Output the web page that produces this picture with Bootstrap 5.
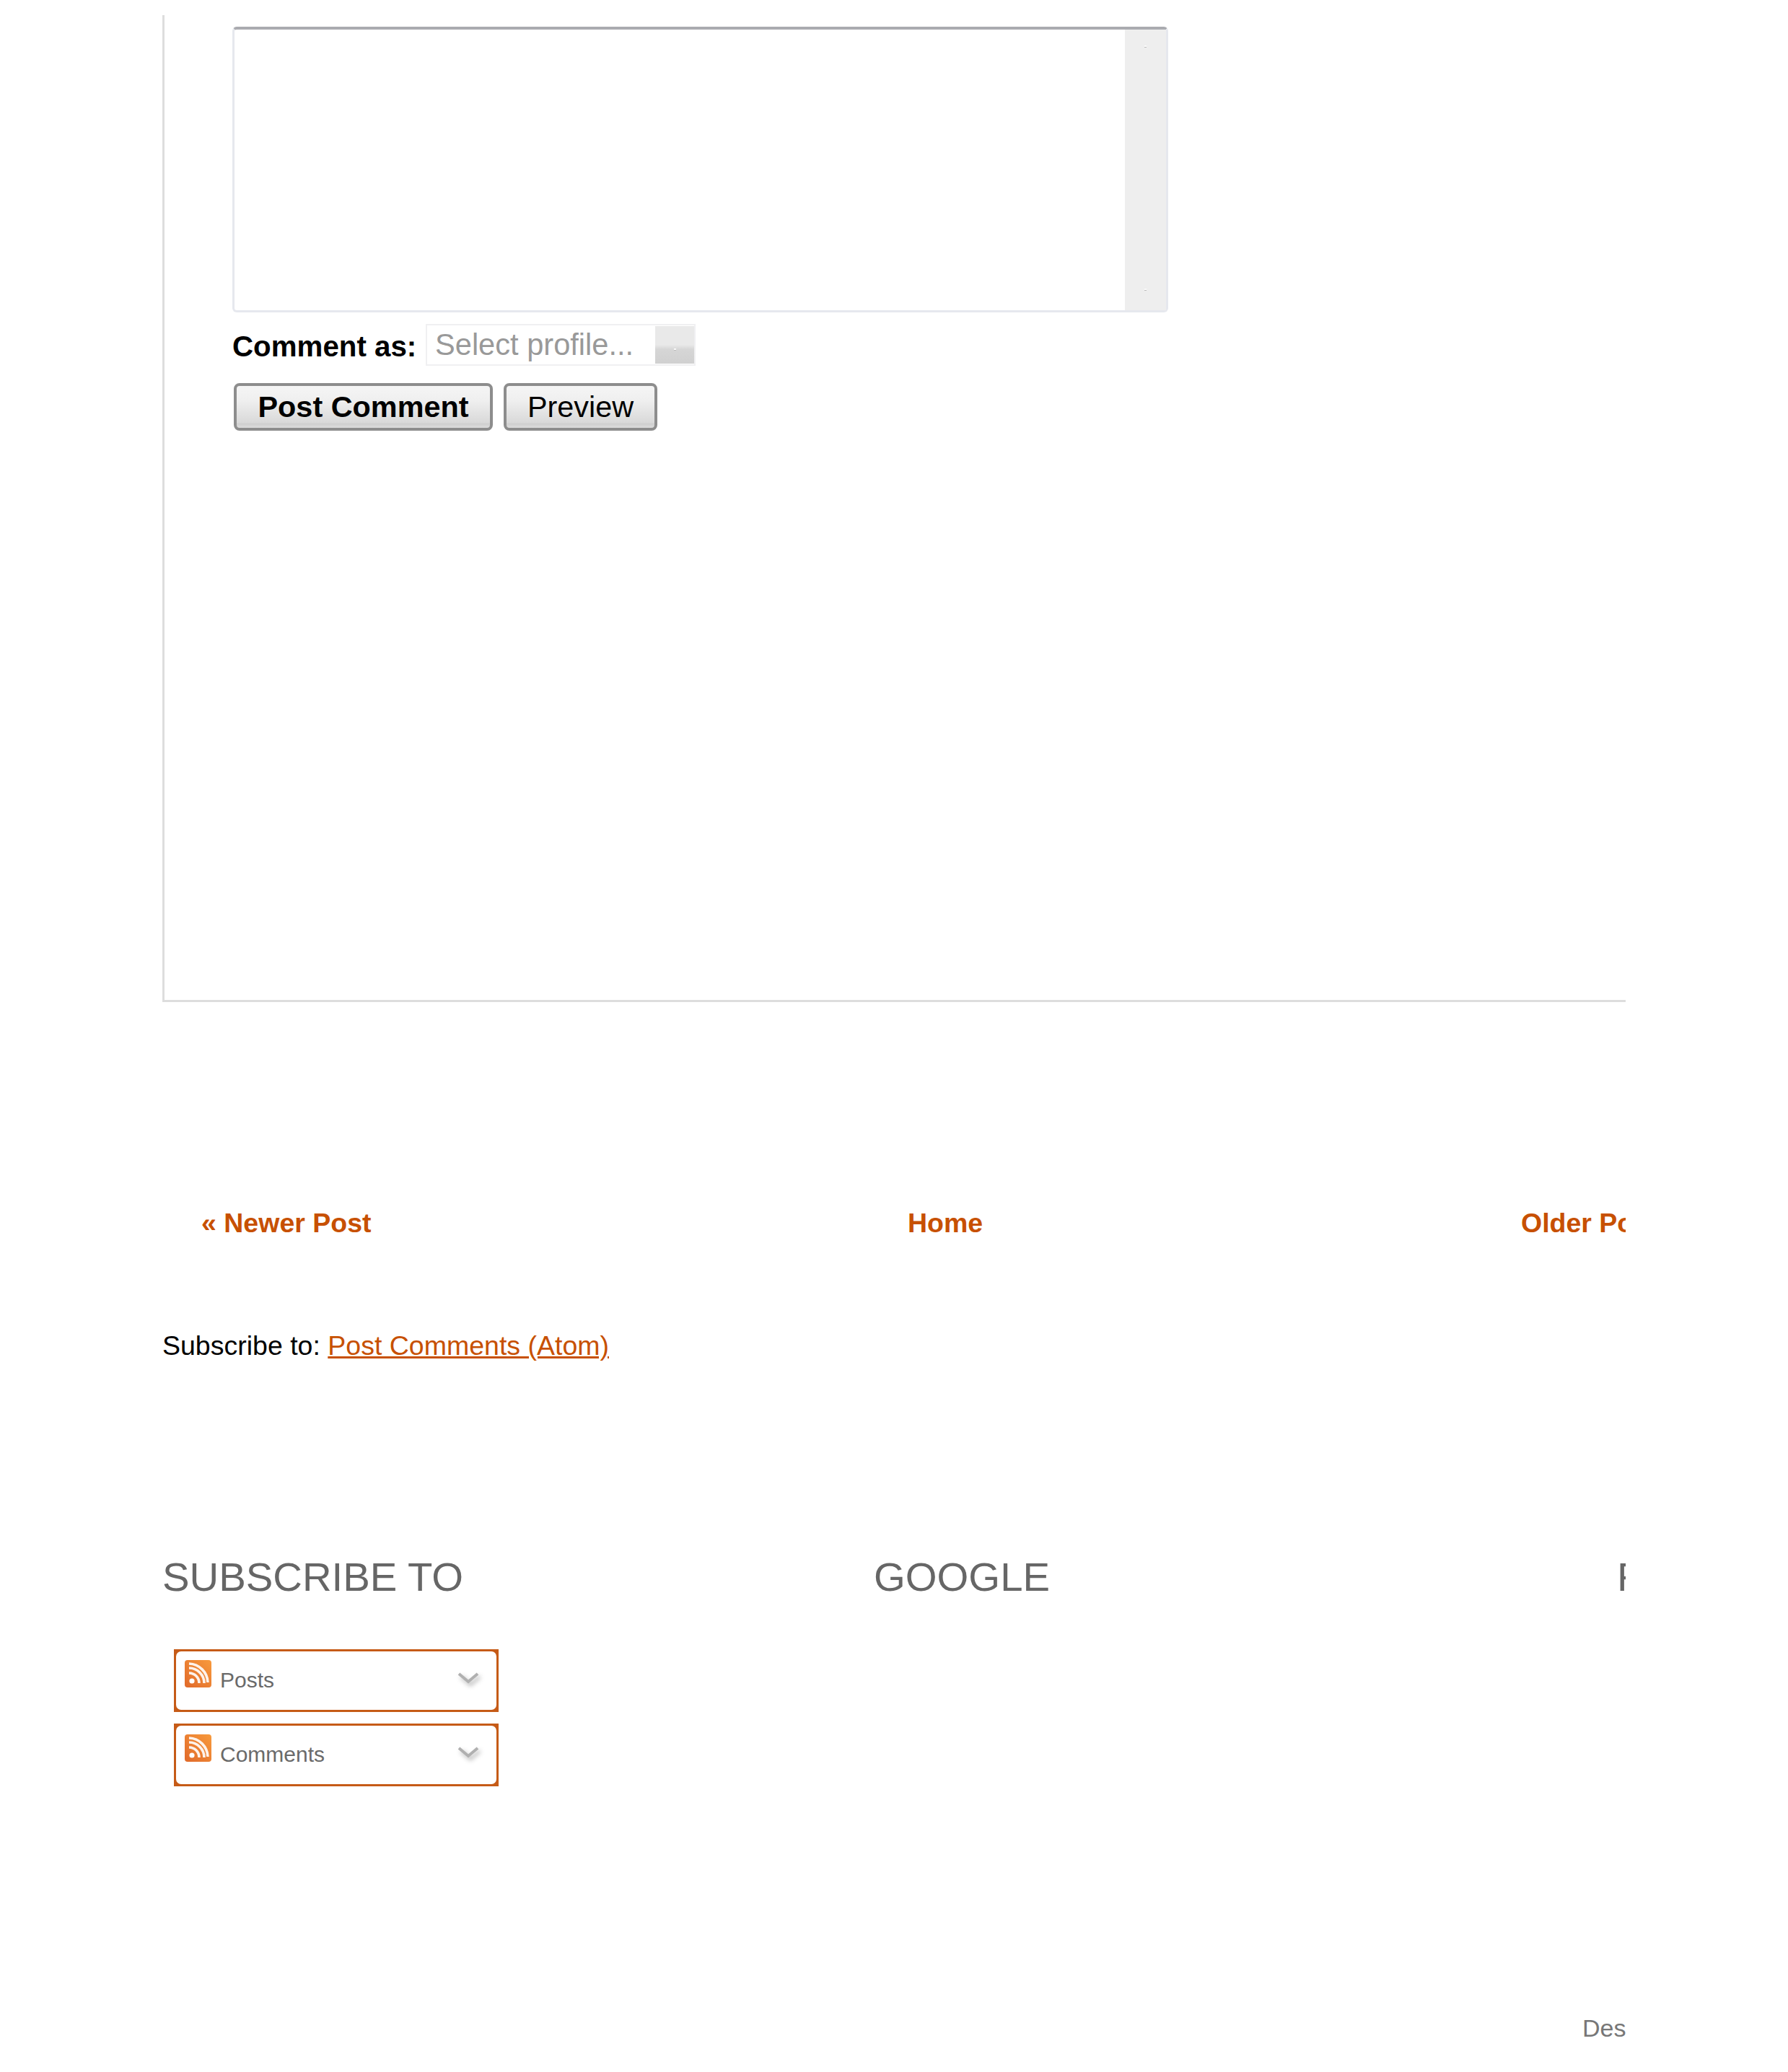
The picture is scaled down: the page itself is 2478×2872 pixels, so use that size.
<!DOCTYPE html>
<html lang="en">
  <head>
    <meta charset="UTF-8" />
    <title>Post Comment</title>
    <link href="https://cdn.jsdelivr.net/npm/bootstrap@5.3.3/dist/css/bootstrap.min.css" rel="stylesheet" />
    <style>
      body {
        background: #fff;
        color: #000;
        font-family: "Liberation Sans", Arial, sans-serif;
      }

      .page-clip {
        width: 2028px;
        margin-left: 225px;
        padding-top: 21px;
        overflow: hidden;
      }

      .post-box {
        height: 1368px;
        padding: 16px 0 0 94px;
        border-left: 3px solid #ddd;
        border-bottom: 3px solid #ddd;
      }

      .comment-frame {
        width: 1297px;
        height: 396px;
        background: #fff;
        border: 3px solid #e6e8ee;
        border-top: 4px solid #aaabb0;
        border-radius: 6px;
      }

      .fake-scroll {
        width: 57px;
        background: #eee;
      }

      .fake-scroll div {
        height: 52px;
        line-height: 40px;
        text-align: center;
      }

      .scroll-dot {
        display: inline-block;
        width: 3px;
        height: 3px;
        background: #fafafa;
        border-bottom: 1px solid #bbb;
      }

      .comment-row {
        margin-top: 16px;
        height: 58px;
      }

      .comment-label {
        font-size: 40.3px;
        font-weight: 700;
        line-height: 58px;
        padding-top: 3px;
        width: 268px;
      }

      .profile-select {
        width: 374px;
        height: 58px;
        border: 2px solid #f0f0f2;
        padding-left: 11px;
        padding-right: 0;
        font-size: 41.6px;
        line-height: 50px;
        color: #999;
      }

      .profile-btn {
        width: 54px;
        height: 52px;
        background: linear-gradient(#e9e9e9 0, #e9e9e9 50%, #d6d6d6 62%, #d0d0d0 100%);
        line-height: 40px;
        text-align: center;
      }

      .btn-row {
        margin-top: 24px;
        margin-left: 2px;
        gap: 15px;
      }

      .btn.old-btn {
        height: 66px;
        padding: 0;
        font-size: 41.4px;
        line-height: 56px;
        color: #000;
        border: 4px solid #8d8d8d;
        border-radius: 8px;
        background: linear-gradient(#f5f5f5 0, #efefef 35%, #d9d9d9 88%, #cfcfcf 90%, #dcdcdc 100%);
      }

      .btn-post {
        width: 359px;
        font-weight: 700;
      }

      .btn-preview {
        width: 213px;
      }

      .pager-row {
        display: grid;
        grid-template-columns: 979px 850px 300px;
        margin-top: 281px;
        padding-left: 54px;
        line-height: 50px;
        font-size: 37.5px;
        font-weight: 700;
        white-space: nowrap;
      }

      .pager-row a {
        color: #c75000;
        text-decoration: none;
      }

      .feed-line {
        margin-top: 120px;
        font-size: 37.5px;
        line-height: 50px;
      }

      .feed-line a {
        color: #c75000;
      }

      .gadget-heads {
        display: grid;
        grid-template-columns: 986px 1030px 300px;
        margin-top: 261px;
        font-size: 56.3px;
        line-height: 70px;
        color: #666;
        white-space: nowrap;
      }

      .feed-stack {
        margin: 65px 0 0 16px;
        width: 450px;
        gap: 16px;
      }

      .feed-box {
        height: 87px;
        padding: 3px;
        background: #c65b17;
      }

      .feed-inner {
        height: 100%;
        padding: 12px 23px 0 12px;
        background: #fff;
        border-radius: 7px;
        font-size: 30px;
        line-height: 46px;
        color: #6a6a6a;
      }

      .feed-name {
        margin-left: 12px;
        padding-top: 5px;
      }

      .chevron-icon {
        margin-top: 17px;
        filter: drop-shadow(3px 4px 3px rgba(0, 0, 0, 0.3));
      }

      .design-line {
        margin-top: 310px;
        padding-left: 1968px;
        width: 2400px;
        font-size: 34px;
        line-height: 50px;
        color: #777;
        white-space: nowrap;
      }
    </style>
  </head>

  <body>
    <div class="page-clip">
      <div class="post-box">
        <div class="comment-frame d-flex justify-content-between">
          <div></div>
          <div class="fake-scroll d-flex flex-column justify-content-between">
            <div><span class="scroll-dot"></span></div>
            <div><span class="scroll-dot"></span></div>
          </div>
        </div>

        <div class="comment-row d-flex">
          <div class="comment-label">Comment as:</div>
          <div class="profile-select d-flex justify-content-between align-items-center">
            <span>Select profile...</span>
            <div class="profile-btn"><span class="scroll-dot"></span></div>
          </div>
        </div>

        <div class="btn-row d-flex">
          <button class="btn old-btn btn-post" type="button">Post Comment</button>
          <button class="btn old-btn btn-preview" type="button">Preview</button>
        </div>
      </div>

      <div class="pager-row">
        <a href="#">« Newer Post</a>
        <a href="#">Home</a>
        <a href="#">Older Post »</a>
      </div>

      <div class="feed-line">Subscribe to: <a href="#">Post Comments (Atom)</a></div>

      <div class="gadget-heads">
        <div>SUBSCRIBE TO</div>
        <div>GOOGLE</div>
        <div>FOLLOWERS</div>
      </div>

      <div class="feed-stack d-flex flex-column">
        <div class="feed-box">
          <div class="feed-inner d-flex">
            <svg width="37" height="38" viewBox="0 0 37 38">
              <defs>
                <linearGradient id="rssFill" x1="1" y1="0" x2="0" y2="1">
                  <stop offset="0" stop-color="#f89a3c" />
                  <stop offset="1" stop-color="#e0692a" />
                </linearGradient>
              </defs>
              <rect width="37" height="38" rx="4" fill="url(#rssFill)" />
              <circle cx="10" cy="29" r="3.6" fill="#fff" />
              <path d="M6 18a14 14 0 0 1 14 14M6 11a21 21 0 0 1 21 21M6 5a27 27 0 0 1 26 26" fill="none" stroke="#fff" stroke-width="3.6" stroke-opacity="0.9" />
            </svg>
            <span class="feed-name flex-grow-1">Posts</span>
            <svg class="chevron-icon" width="31" height="18" viewBox="0 0 31 18">
              <path d="M2 2l13 11L28 2" fill="none" stroke="#b0b0b0" stroke-width="4" />
            </svg>
          </div>
        </div>
        <div class="feed-box">
          <div class="feed-inner d-flex">
            <svg width="37" height="38" viewBox="0 0 37 38">
              <rect width="37" height="38" rx="4" fill="url(#rssFill)" />
              <circle cx="10" cy="29" r="3.6" fill="#fff" />
              <path d="M6 18a14 14 0 0 1 14 14M6 11a21 21 0 0 1 21 21M6 5a27 27 0 0 1 26 26" fill="none" stroke="#fff" stroke-width="3.6" stroke-opacity="0.9" />
            </svg>
            <span class="feed-name flex-grow-1">Comments</span>
            <svg class="chevron-icon" width="31" height="18" viewBox="0 0 31 18">
              <path d="M2 2l13 11L28 2" fill="none" stroke="#b0b0b0" stroke-width="4" />
            </svg>
          </div>
        </div>
      </div>

      <div class="design-line">Designed by</div>
    </div>

    <script src="https://cdn.jsdelivr.net/npm/bootstrap@5.3.3/dist/js/bootstrap.bundle.min.js"></script>
  </body>
</html>
